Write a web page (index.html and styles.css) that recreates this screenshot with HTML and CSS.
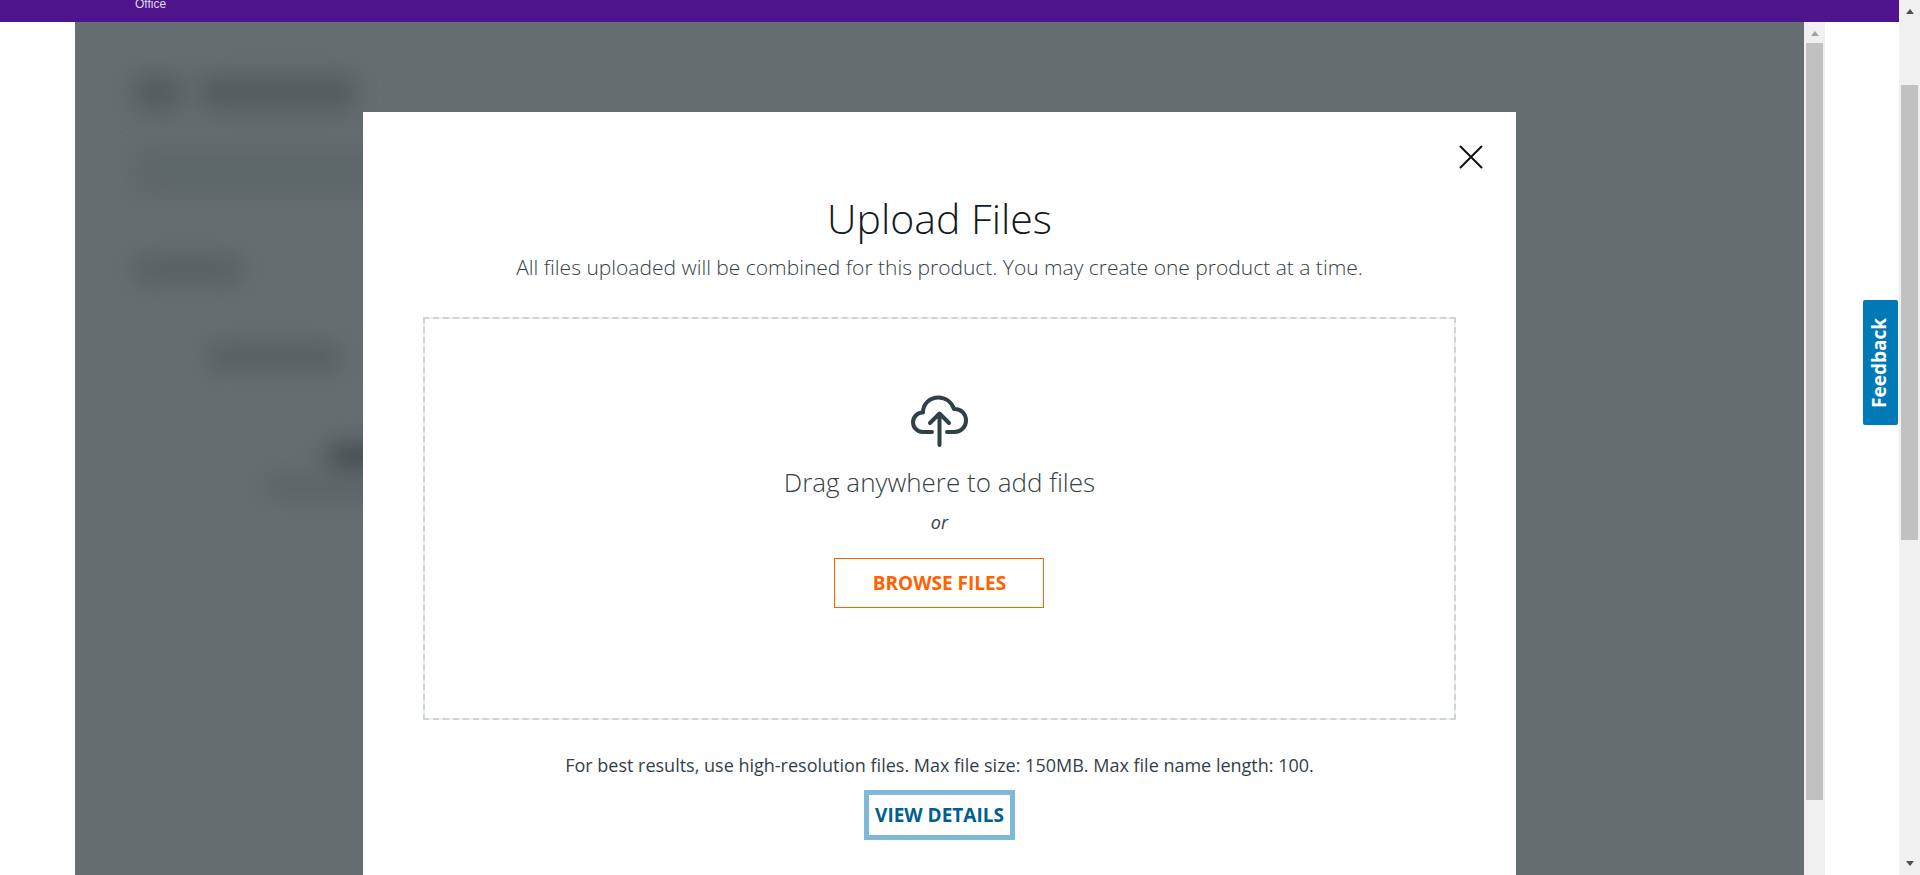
FILE: index.html
```html
<!DOCTYPE html>
<html lang="en">
<head>
<meta charset="utf-8">
<title>Upload Files</title>
<link rel="stylesheet" href="styles.css">
</head>
<body>
<div class="window">
  <div class="page">
    <header class="topbar"><span class="brand">Office</span></header>
    <div class="frame">
      <main class="viewport">
        <div class="backdrop" aria-hidden="true">
          <div class="smudge title"><i></i><i></i></div>
          <div class="smudge para"></div>
          <div class="smudge subtitle"></div>
          <div class="smudge item"></div>
          <div class="smudge heading"></div>
          <div class="smudge caption"></div>
        </div>
        <section class="modal" role="dialog" aria-labelledby="modal-title">
          <div class="modal-head">
            <button class="close" type="button" aria-label="Close">
              <svg width="24" height="24" viewBox="0 0 24 24"><path d="M1.500 1.500L22.500 22.500M22.500 1.500L1.500 22.500" fill="none" stroke="#111" stroke-width="2" stroke-linecap="round"/></svg>
            </button>
          </div>
          <h1 class="modal-title" id="modal-title">Upload Files</h1>
          <p class="lead">All files uploaded will be combined for this product. You may create one product at a time.</p>
          <div class="dropzone">
            <svg class="cloud" width="58" height="52" viewBox="0 0 58 52" fill="none" stroke="#2f4047" stroke-width="4" stroke-linecap="round" stroke-linejoin="round">
              <path d="M22 37H12.500A9.700 9.700 0 0 1 13 17.500C13 8.500 20 2.500 28.500 2.500C35.500 2.500 41.500 7 44 14C51 13.500 56 19 56 25.500C56 32 51 37 44.500 37H37"/>
              <path d="M29.500 50V18.500M20 28L29.500 18.500L39 28"/>
            </svg>
            <p class="drag">Drag anywhere to add files</p>
            <p class="or">or</p>
            <button class="browse" type="button">BROWSE FILES</button>
          </div>
          <p class="note">For best results, use high-resolution files. Max file size: 150MB. Max file name length: 100.</p>
          <button class="details" type="button">VIEW DETAILS</button>
        </section>
      </main>
      <div class="scroll inner">
        <span class="arrow up"></span>
        <span class="thumb"></span>
      </div>
    </div>
    <button class="feedback" type="button">Feedback</button>
  </div>
  <div class="scroll outer">
    <span class="arrow up"></span>
    <span class="thumb"></span>
    <span class="arrow down"></span>
  </div>
</div>
</body>
</html>
```
FILE: styles.css
```css
* { box-sizing: border-box; }
body {
  margin: 0;
  font-family: "Open Sans", "Noto Sans", sans-serif;
  color: #333f48;
  background: #fff;
}
p, h1 { margin: 0; }
button { font-family: inherit; cursor: pointer; }

.window { display: flex; height: 100vh; overflow: hidden; }
.page { position: relative; flex: 1; display: flex; flex-direction: column; }
.topbar {
  height: 22px;
  flex: none;
  padding-left: 135px;
  background: #4d148c;
}
.brand {
  display: block;
  margin-top: -3px;
  font: 12px/14px "Liberation Sans", sans-serif;
  color: #e3d9ee;
}
.frame { flex: 1; display: flex; min-height: 0; margin: 0 74px 0 75px; }
.viewport {
  position: relative;
  flex: 1;
  display: flex;
  justify-content: center;
  padding-top: 90px;
  background: #656d70;
  overflow: hidden;
}

/* Page content, out of focus behind the dialog */
.backdrop { position: absolute; inset: 0; padding: 54px 0 0 60px; }
.smudge { filter: blur(12px); background: #596164; }
.smudge.title { display: flex; gap: 20px; width: 220px; height: 34px; background: none; }
.smudge.title i { width: 46px; background: #535b5e; }
.smudge.title i + i { flex: 1; }
.smudge.para { width: 300px; height: 46px; margin-top: 38px; background: #5e6669; }
.smudge.subtitle { width: 106px; height: 24px; margin-top: 64px; background: #565e61; }
.smudge.item { width: 130px; height: 22px; margin: 64px 0 0 74px; background: #545c5f; }
.smudge.heading { width: 100px; height: 26px; margin: 76px 0 0 194px; background: #444c4f; }
.smudge.caption { width: 160px; height: 18px; margin: 8px 0 0 130px; background: #596164; }

.modal {
  position: relative;
  display: flex;
  flex-direction: column;
  align-items: center;
  width: 66.7%;
  padding: 0 60px;
  background: #fff;
}
.modal-head { align-self: stretch; display: flex; justify-content: flex-end; height: 76px; padding-top: 32px; margin-right: -28px; }
.close { width: 26px; height: 26px; padding: 1px; border: 0; background: none; }
.close svg { display: block; }
.modal-title { font-size: 41px; line-height: 60px; font-weight: 300; color: #14191c; }
.lead { margin-top: 1px; font-size: 21px; line-height: 36px; font-weight: 300; white-space: nowrap; }
.dropzone {
  align-self: stretch;
  display: flex;
  flex-direction: column;
  align-items: center;
  height: 403px;
  margin-top: 32px;
  padding-top: 76px;
  border: 2px dashed #cdd5d9;
  background: linear-gradient(#fff, #fff) padding-box, linear-gradient(#ebf0f2, #ebf0f2) border-box;
}
.cloud { display: block; }
.drag { margin-top: 15px; font-size: 26px; line-height: 40px; font-weight: 300; }
.or { margin-top: 6px; font-size: 18px; line-height: 28px; font-style: italic; }
.browse {
  width: 210px;
  height: 50px;
  margin-top: 22px;
  border: 1px solid #ff6200;
  background: #fff;
  color: #ff6200;
  font-size: 19px;
  font-weight: 700;
}
.note { margin-top: 31px; font-size: 18px; line-height: 28px; white-space: nowrap; }
.details {
  width: 151px;
  height: 50px;
  margin-top: 11px;
  padding: 0;
  border: 5px solid #80b9d8;
  background: #fff;
  color: #005f91;
  font-size: 19px;
  font-weight: 700;
  white-space: nowrap;
}

.feedback {
  position: absolute;
  top: 300px;
  right: 1px;
  width: 35px;
  height: 125px;
  padding: 0 3px 0 0;
  border: 0;
  border-radius: 2px;
  background: #007ab7;
  color: #fff;
  font-size: 19px;
  font-weight: 700;
  writing-mode: sideways-lr;
}

.scroll { display: flex; flex-direction: column; align-items: center; flex: none; width: 21px; background: #f0f0f0; }
.thumb { width: 17px; background: #c1c1c1; }
.arrow { border: 4px solid transparent; border-top-width: 0; }
.arrow.up { border-bottom: 5px solid #505050; }
.arrow.down { border-bottom-width: 0; border-top: 5px solid #505050; margin: auto 0 9px; }
.inner .arrow.up { margin-top: 9px; border-bottom-color: #a3a3a3; }
.inner .thumb { height: 88.7%; margin-top: 7px; }
.outer .arrow.up { margin-top: 9px; }
.outer .thumb { height: 52%; margin-top: 71px; }
```
